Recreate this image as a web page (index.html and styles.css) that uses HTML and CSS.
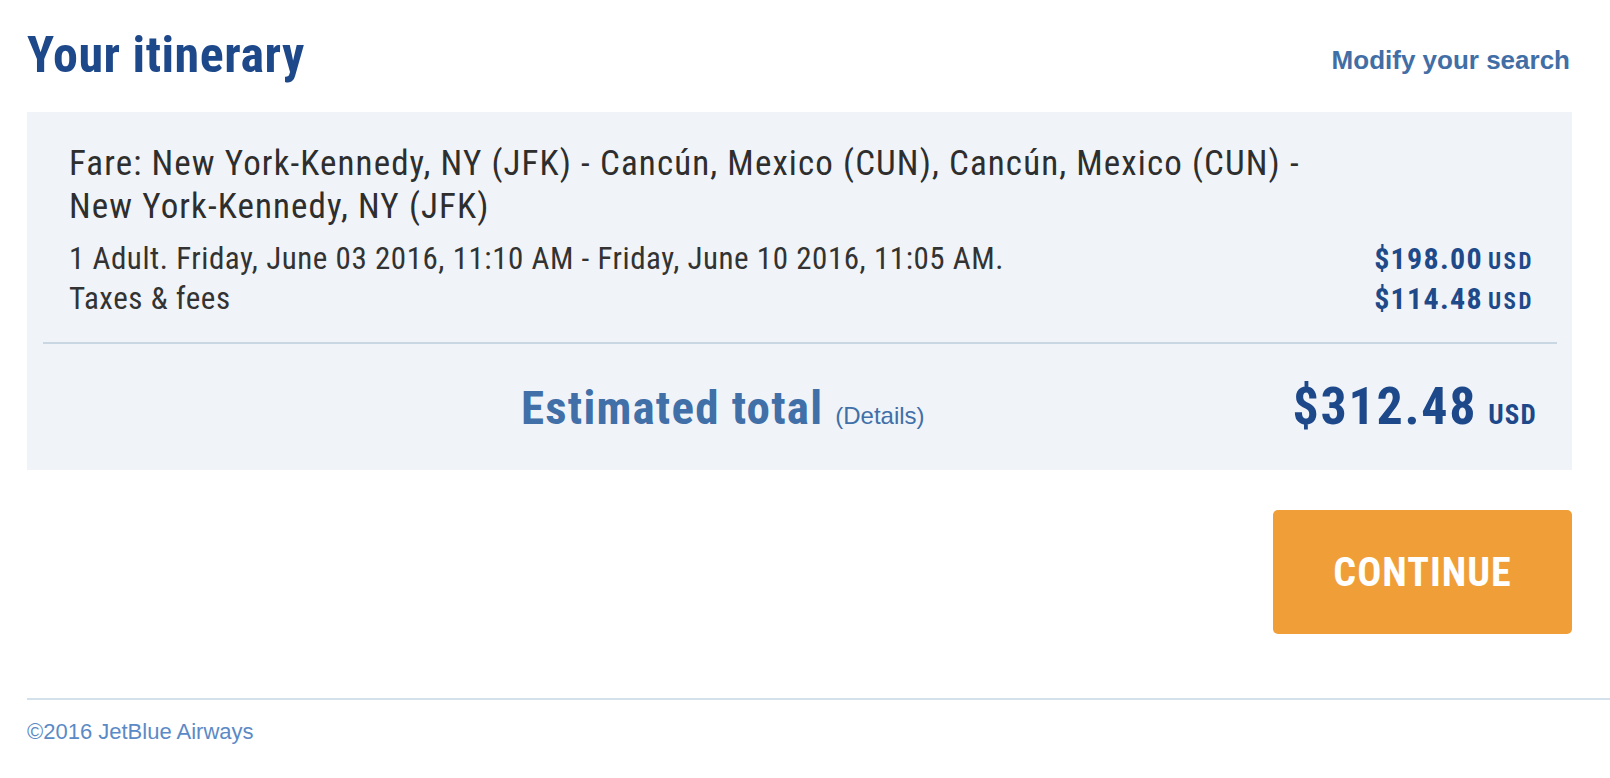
FILE: index.html
```html
<!DOCTYPE html>
<html lang="en">
<head>
<meta charset="utf-8">
<title>Your itinerary</title>
<link rel="stylesheet" href="styles.css">
</head>
<body>
<div class="page">
  <header class="header">
    <h1 class="title">Your itinerary</h1>
    <a class="modify" href="#">Modify your search</a>
  </header>

  <section class="panel">
    <div class="inner">
      <p class="fare">Fare: New York-Kennedy, NY (JFK) - Cancún, Mexico (CUN), Cancún, Mexico (CUN) -<br>New York-Kennedy, NY (JFK)</p>
      <div class="row first">
        <span class="desc">1 Adult. Friday, June 03 2016, 11:10 AM - Friday, June 10 2016, 11:05 AM.</span>
        <span class="price">$198.00<span class="cur">USD</span></span>
      </div>
      <div class="row">
        <span class="desc">Taxes &amp; fees</span>
        <span class="price">$114.48<span class="cur">USD</span></span>
      </div>
    </div>
    <hr class="divider">
    <div class="inner total">
      <span class="total-label">Estimated total <a class="details" href="#">(Details)</a></span>
      <span class="total-price">$312.48<span class="total-cur">USD</span></span>
    </div>
  </section>

  <div class="actions">
    <button class="continue" type="button">CONTINUE</button>
  </div>
</div>

<footer class="footer">
  <div class="footer-text">©2016 JetBlue Airways</div>
</footer>
</body>
</html>
```

FILE: styles.css
```css
html, body {
  margin: 0;
  padding: 0;
  background: #ffffff;
}

body {
  font-family: "Liberation Sans", Arial, sans-serif;
  color: #333333;
}

.page {
  padding: 0 38px 0 27px;
}

.header {
  display: flex;
  justify-content: space-between;
  align-items: flex-start;
  padding-top: 24px;
}

.title {
  margin: 0;
  font-family: "Roboto Condensed", "Roboto", sans-serif;
  font-stretch: condensed;
  font-weight: 700;
  font-size: 50px;
  letter-spacing: 0.5px;
  line-height: 62px;
  color: #1d4889;
}

.modify {
  margin-top: 21px;
  margin-right: 2px;
  font-family: "Liberation Sans", Arial, sans-serif;
  font-weight: 700;
  font-size: 26px;
  line-height: 30px;
  color: #426ea6;
  text-decoration: none;
}

.panel {
  margin-top: 26px;
  background: #f0f4f8;
  padding: 30px 15px 27px 16px;
  font-family: "Roboto Condensed", "Roboto", sans-serif;
  font-stretch: condensed;
}

.inner {
  padding: 0 23px 0 26px;
}

.fare {
  margin: 0;
  font-size: 35px;
  letter-spacing: 1.1px;
  line-height: 43px;
  color: #2e2e2e;
}

.row {
  display: flex;
  justify-content: space-between;
  align-items: baseline;
  font-size: 31px;
  line-height: 40px;
}

.row.first {
  margin-top: 11px;
}

.desc {
  color: #333333;
  letter-spacing: 0.55px;
}

.price {
  font-weight: 700;
  font-size: 30px;
  letter-spacing: 1.3px;
  color: #1f4a8a;
}

.cur {
  margin-left: 5px;
  font-size: 23px;
  letter-spacing: 2.5px;
  line-height: 1;
}

.divider {
  margin: 23px 0 0 0;
  border: 0;
  height: 2px;
  background: #c9d7e3;
}

.total {
  display: flex;
  align-items: baseline;
  justify-content: space-between;
  margin-top: 28px;
  line-height: 70px;
}

.total-label {
  margin-left: 452px;
  font-weight: 700;
  font-size: 47px;
  letter-spacing: 1.2px;
  color: #416fa8;
}

.details {
  font-family: "Liberation Sans", Arial, sans-serif;
  font-weight: 400;
  font-size: 24px;
  letter-spacing: 0;
  line-height: 1;
  color: #416fa8;
  text-decoration: none;
}

.total-price {
  margin-right: -3px;
  font-weight: 700;
  font-size: 52px;
  letter-spacing: 1.7px;
  color: #1d4889;
}

.total-cur {
  margin-left: 11px;
  font-size: 27px;
  letter-spacing: 1.2px;
  line-height: 1;
}

.actions {
  display: flex;
  justify-content: flex-end;
  margin-top: 40px;
}

.continue {
  width: 299px;
  height: 124px;
  border: 0;
  border-radius: 5px;
  background: #f09f38;
  color: #ffffff;
  font-family: "Roboto Condensed", "Roboto", sans-serif;
  font-stretch: condensed;
  font-weight: 700;
  font-size: 40px;
  letter-spacing: 1px;
  padding: 0;
  cursor: pointer;
}

.footer {
  margin: 64px 0 0 27px;
  border-top: 2px solid #d3e1ec;
}

.footer-text {
  margin-top: 19px;
  font-family: "Liberation Sans", Arial, sans-serif;
  font-size: 22px;
  line-height: 25px;
  color: #5b8ac6;
}
```
